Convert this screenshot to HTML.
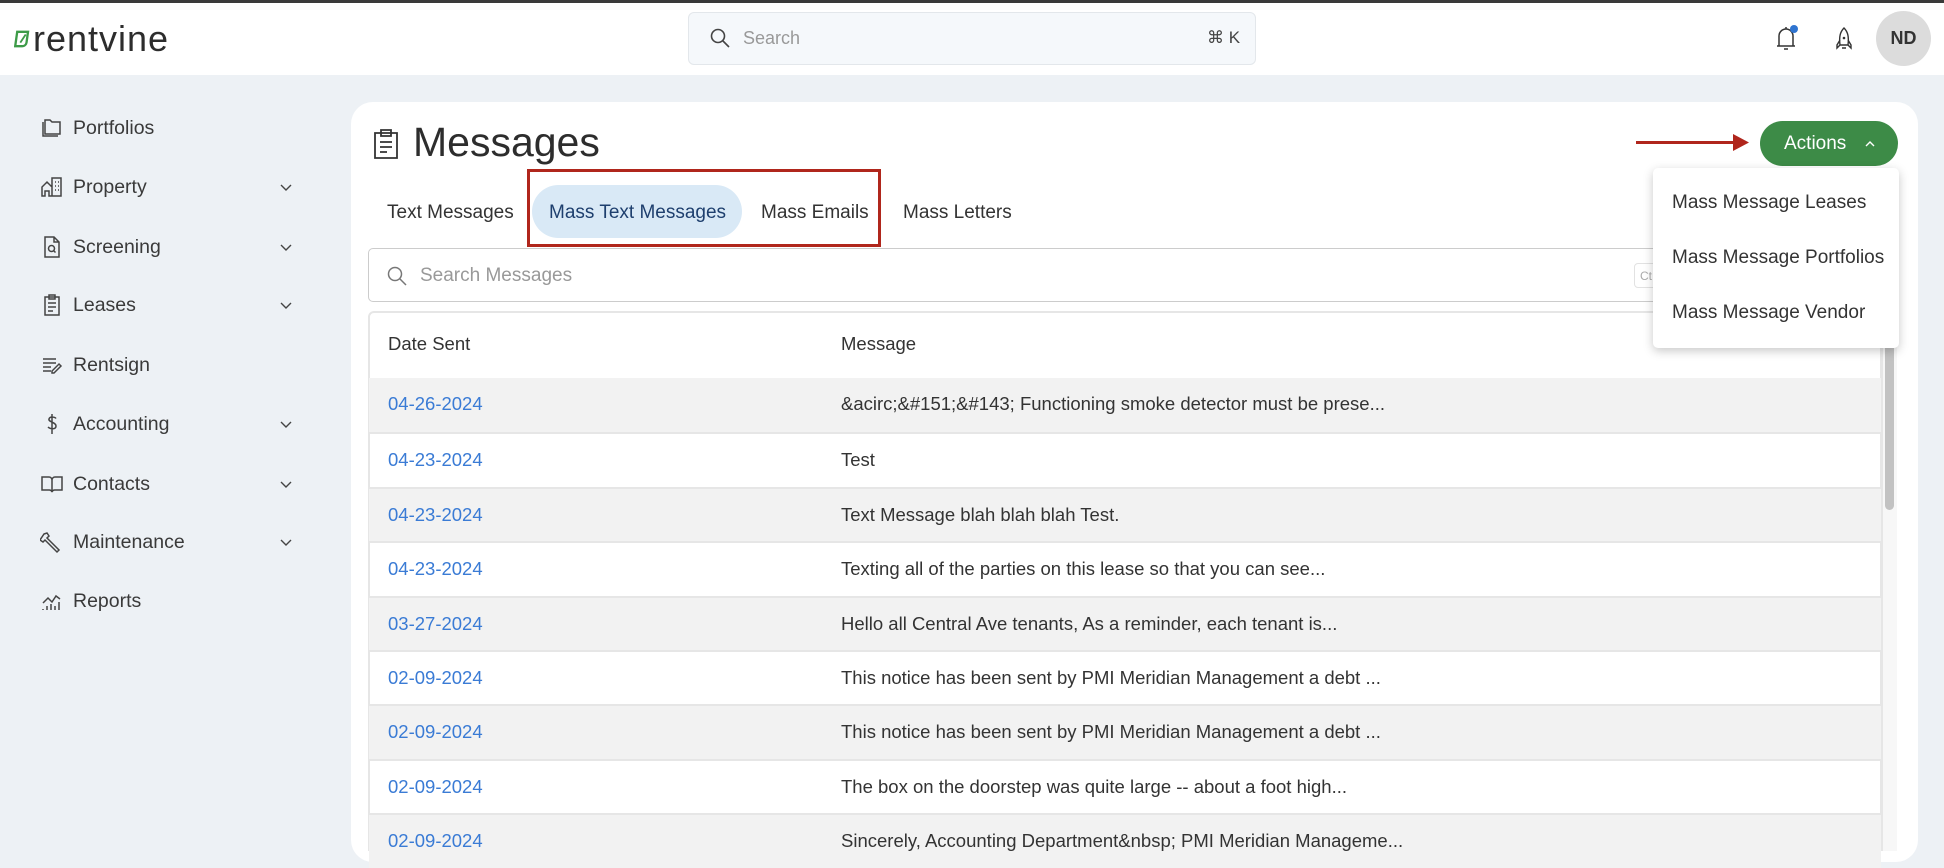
<!DOCTYPE html>
<html><head><meta charset="utf-8"><style>
*{box-sizing:border-box;margin:0;padding:0}
body{width:1944px;height:840px;overflow:hidden;background:#edf1f5;font-family:"Liberation Sans",sans-serif;color:#333;position:relative}
.abs{position:absolute}
#top{left:0;top:0;width:1944px;height:3px;background:#3a3a3a}
#hdr{left:0;top:3px;width:1944px;height:72px;background:#fff}
.side{left:40px;font-size:19.5px;color:#3a3a3a;display:flex;align-items:center;height:30px}
.side svg{width:24px;height:24px;margin-right:9px;fill:none;stroke:#444;stroke-width:1.5}
.chev{left:279px;width:14px;height:14px}
#card{left:351px;top:102px;width:1567px;height:760px;background:#fff;border-radius:22px}
.tab{top:202px;font-size:19px;color:#333}
.row{left:369px;width:1512px;height:55px;border-top:2px solid #e6e6e6;font-size:18.5px}
.row span{position:absolute;top:15px}
.d{left:19px;color:#3a7bd5}
.m{left:472px;color:#333}
.g{background:#f2f2f2}
</style></head><body>
<div id="top" class="abs"></div>
<div id="hdr" class="abs"></div>
<!-- logo -->
<div class="abs" style="left:14px;top:21px;display:flex;align-items:center">
<svg width="18" height="20" viewBox="0 0 20 22"><path d="M4 3h12v12a4 4 0 0 1-4 4H4z" fill="none" stroke="#3d9b48" stroke-width="2.6" transform="skewX(-8)"/><path d="M7 15l6-9" stroke="#3d9b48" stroke-width="2"/></svg>
<span style="font-size:36px;color:#2d2d2d;letter-spacing:1px;margin-left:1px;line-height:36px">rentvine</span></div>
<!-- search -->
<div class="abs" style="left:688px;top:12px;width:568px;height:53px;background:#f5f8fb;border:1px solid #e3e7eb;border-radius:6px"></div>
<svg class="abs" style="left:709px;top:27px" width="22" height="22" viewBox="0 0 22 22"><circle cx="9" cy="9" r="6.5" fill="none" stroke="#444" stroke-width="1.6"/><path d="M14 14l6 6" stroke="#444" stroke-width="1.6"/></svg>
<div class="abs" style="left:743px;top:28px;font-size:18px;color:#999">Search</div>
<div class="abs" style="left:1207px;top:28px;font-size:17px;color:#444">⌘ K</div>
<!-- bell -->
<svg class="abs" style="left:1774px;top:24px" width="26" height="30" viewBox="0 0 26 30"><path d="M5 22V12a7 7 0 0 1 14 0v10M3 22h18M12 5V3M10 25h4" fill="none" stroke="#333" stroke-width="1.5"/><circle cx="20" cy="5" r="4" fill="#2f74d0"/></svg>
<svg class="abs" style="left:1832px;top:26px" width="24" height="28" viewBox="0 0 24 28"><path d="M12 2c4 4 5 9 4 17H8C7 11 8 6 12 2zM8 14l-3 5v3l3-3M16 14l3 5v3l-3-3M10 22h4" fill="none" stroke="#333" stroke-width="1.4"/><circle cx="12" cy="12" r="1.3" fill="#333"/></svg>
<div class="abs" style="left:1876px;top:11px;width:55px;height:55px;border-radius:50%;background:#dcdcdc;font-weight:bold;font-size:18px;color:#333;display:flex;align-items:center;justify-content:center">ND</div>
<!-- sidebar -->
<div class="abs side" style="top:113px"><svg viewBox="0 0 24 24"><path d="M3 6v14h15M5 4h5l2 2h8v12H5z"/></svg>Portfolios</div>
<div class="abs side" style="top:172px"><svg viewBox="0 0 24 24"><path d="M2 21v-9l5-5 5 5v9H9v-5H5v5zM12 21V3h9v18zM15 7h1M18 7h1M15 11h1M18 11h1M15 15h1M18 15h1"/></svg>Property</div>
<div class="abs side" style="top:232px"><svg viewBox="0 0 24 24"><path d="M5 2h9l5 5v15H5zM14 2v5h5"/><circle cx="11.5" cy="13.5" r="3"/><path d="M13.5 15.5l2 2"/></svg>Screening</div>
<div class="abs side" style="top:290px"><svg viewBox="0 0 24 24"><path d="M5 4h14v18H5zM9 2h6v4H9zM8 10h8M8 14h8M8 18h5"/></svg>Leases</div>
<div class="abs side" style="top:350px"><svg viewBox="0 0 24 24"><path d="M3 6h13M3 10h13M3 14h8M3 18h8M14 20l7-7-2-2-7 7v2z"/></svg>Rentsign</div>
<div class="abs side" style="top:409px"><svg viewBox="0 0 24 24"><path d="M12 2v20M16 6.5c-1-1.5-6-2.5-7 .5s7 3 7 7-6 3-8 1"/></svg>Accounting</div>
<div class="abs side" style="top:469px"><svg viewBox="0 0 24 24"><path d="M2 5h7a3 3 0 0 1 3 3v12a3 3 0 0 0-3-2H2zM22 5h-7a3 3 0 0 0-3 3v12a3 3 0 0 1 3-2h7z"/></svg>Contacts</div>
<div class="abs side" style="top:527px"><svg viewBox="0 0 24 24"><path d="M4 4l3-1 2 3-2 2 4 4 8 8-2 2-8-8-4-4-2 2-3-2z"/></svg>Maintenance</div>
<div class="abs side" style="top:586px"><svg viewBox="0 0 24 24"><path d="M3 21v-1M7 21v-4M11 21v-6M15 21v-4M19 21v-8M3 14l5-5 4 4 4-6 4 3"/></svg>Reports</div>
<svg class="abs chev" style="top:181px" viewBox="0 0 14 14"><path d="M2 4l5 5 5-5" fill="none" stroke="#444" stroke-width="1.4"/></svg>
<svg class="abs chev" style="top:241px" viewBox="0 0 14 14"><path d="M2 4l5 5 5-5" fill="none" stroke="#444" stroke-width="1.4"/></svg>
<svg class="abs chev" style="top:299px" viewBox="0 0 14 14"><path d="M2 4l5 5 5-5" fill="none" stroke="#444" stroke-width="1.4"/></svg>
<svg class="abs chev" style="top:418px" viewBox="0 0 14 14"><path d="M2 4l5 5 5-5" fill="none" stroke="#444" stroke-width="1.4"/></svg>
<svg class="abs chev" style="top:478px" viewBox="0 0 14 14"><path d="M2 4l5 5 5-5" fill="none" stroke="#444" stroke-width="1.4"/></svg>
<svg class="abs chev" style="top:536px" viewBox="0 0 14 14"><path d="M2 4l5 5 5-5" fill="none" stroke="#444" stroke-width="1.4"/></svg>
<!-- card -->
<div id="card" class="abs"></div>
<svg class="abs" style="left:372px;top:128px" width="28" height="32" viewBox="0 0 28 32"><path d="M3 5h22v25H3zM9 2h10v6H9zM8 14h12M8 19h12M8 24h7" fill="none" stroke="#333" stroke-width="1.8"/></svg>
<div class="abs" style="left:413px;top:119px;font-size:41px;color:#2d2d2d">Messages</div>
<!-- arrow -->
<div class="abs" style="left:1636px;top:141px;width:100px;height:3px;background:#b0261c"></div>
<svg class="abs" style="left:1733px;top:134px" width="16" height="17"><path d="M0 0l16 8.5L0 17z" fill="#b0261c"/></svg>
<div class="abs" style="left:1760px;top:121px;width:138px;height:45px;border-radius:23px;background:#3d8b47;color:#fff;font-size:19px;display:flex;align-items:center;padding-left:24px">Actions<svg style="margin-left:18px" width="12" height="8" viewBox="0 0 12 8"><path d="M2 6l4-4 4 4" fill="none" stroke="#fff" stroke-width="1.4"/></svg></div>
<!-- tabs -->
<div class="abs" style="left:532px;top:185px;width:210px;height:53px;border-radius:27px;background:#d9e9f6"></div>
<div class="abs tab" style="left:387px">Text Messages</div>
<div class="abs tab" style="left:549px;color:#1e3f6e">Mass Text Messages</div>
<div class="abs tab" style="left:761px">Mass Emails</div>
<div class="abs tab" style="left:903px">Mass Letters</div>
<div class="abs" style="left:527px;top:169px;width:354px;height:78px;border:3px solid #b0261c"></div>
<!-- search messages -->
<div class="abs" style="left:368px;top:248px;width:1529px;height:54px;border:1.5px solid #ccc;border-radius:5px"></div>
<svg class="abs" style="left:386px;top:265px" width="22" height="22" viewBox="0 0 22 22"><circle cx="9" cy="9" r="6.5" fill="none" stroke="#777" stroke-width="1.5"/><path d="M14 14l6 6" stroke="#777" stroke-width="1.5"/></svg>
<div class="abs" style="left:420px;top:265px;font-size:19px;color:#999">Search Messages</div>
<div class="abs" style="left:1634px;top:263px;width:30px;height:25px;border:1px solid #e2e2e2;border-radius:4px;font-size:12px;color:#aaa;padding:5px 0 0 5px;overflow:hidden">Ct</div>
<!-- table -->
<div class="abs" style="left:368px;top:311px;width:1514px;height:540px;border:2px solid #e6e6e6;border-radius:6px 6px 0 0"></div>
<div class="abs" style="left:388px;top:333px;font-size:18.5px;color:#333">Date Sent</div>
<div class="abs" style="left:841px;top:333px;font-size:18.5px;color:#333">Message</div>
<div class="abs row g" style="top:378px;border-top:none"><span class="d">04-26-2024</span><span class="m">&amp;acirc;&amp;#151;&amp;#143; Functioning smoke detector must be prese...</span></div>
<div class="abs row" style="top:432px"><span class="d">04-23-2024</span><span class="m">Test</span></div>
<div class="abs row g" style="top:487px"><span class="d">04-23-2024</span><span class="m">Text Message blah blah blah Test.</span></div>
<div class="abs row" style="top:541px"><span class="d">04-23-2024</span><span class="m">Texting all of the parties on this lease so that you can see...</span></div>
<div class="abs row g" style="top:596px"><span class="d">03-27-2024</span><span class="m">Hello all Central Ave tenants, As a reminder, each tenant is...</span></div>
<div class="abs row" style="top:650px"><span class="d">02-09-2024</span><span class="m">This notice has been sent by PMI Meridian Management a debt ...</span></div>
<div class="abs row g" style="top:704px"><span class="d">02-09-2024</span><span class="m">This notice has been sent by PMI Meridian Management a debt ...</span></div>
<div class="abs row" style="top:759px"><span class="d">02-09-2024</span><span class="m">The box on the doorstep was quite large -- about a foot high...</span></div>
<div class="abs row g" style="top:813px"><span class="d">02-09-2024</span><span class="m">Sincerely, Accounting Department&amp;nbsp; PMI Meridian Manageme...</span></div>
<!-- scrollbar -->
<div class="abs" style="left:1882px;top:311px;width:15px;height:540px;background:#f7f7f7;border-left:1px solid #e6e6e6"></div>
<div class="abs" style="left:1885px;top:340px;width:9px;height:170px;border-radius:5px;background:#c2c2c2"></div>
<!-- dropdown -->
<div class="abs" style="left:1653px;top:168px;width:246px;height:180px;background:#fff;border-radius:5px;box-shadow:0 3px 10px rgba(0,0,0,.22)"></div>
<div class="abs" style="left:1672px;top:192px;font-size:19px;color:#333">Mass Message Leases</div>
<div class="abs" style="left:1672px;top:247px;font-size:19px;color:#333">Mass Message Portfolios</div>
<div class="abs" style="left:1672px;top:302px;font-size:19px;color:#333">Mass Message Vendor</div>
</body></html>
